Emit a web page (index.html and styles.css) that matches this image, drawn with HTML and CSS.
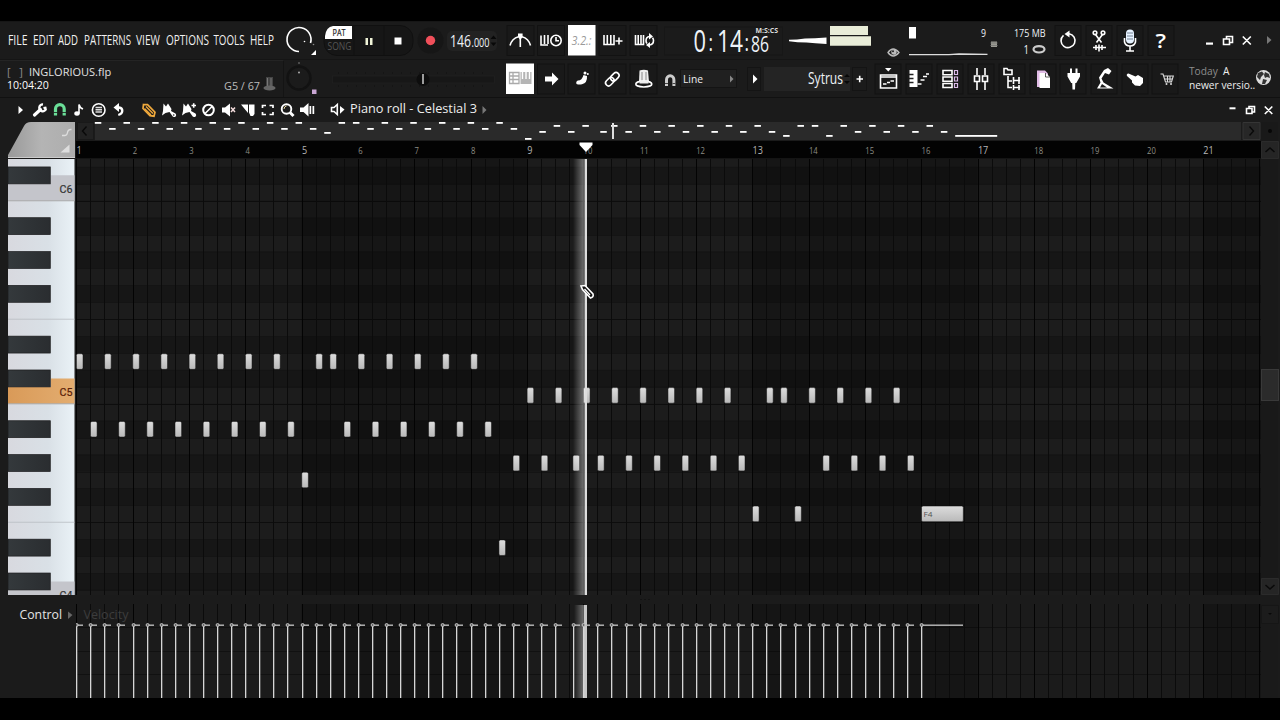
FILE: index.html
```html
<!DOCTYPE html>
<html lang="en">
<head>
<meta charset="utf-8">
<title>Piano roll - Celestial 3</title>
<link rel="stylesheet" href="styles.css">
</head>
<body>
<main class="app">
  <header class="toolbar">
    <div class="row row-main">
      <svg class="g" width="284" height="38" viewBox="0 22 284 38">
        <g class="menu">
          <text x="8" y="45" textLength="19.500">FILE</text><text x="33" y="45" textLength="21">EDIT</text>
          <text x="58" y="45" textLength="20">ADD</text><text x="84" y="45" textLength="47">PATTERNS</text>
          <text x="136" y="45" textLength="24">VIEW</text><text x="166" y="45" textLength="43">OPTIONS</text>
          <text x="213.500" y="45" textLength="31">TOOLS</text><text x="250" y="45" textLength="24">HELP</text>
        </g>
      </svg>
      <svg class="g" width="36" height="38" viewBox="284 22 36 38">
        <path class="s" d="M310.500 43A12 12 0 1 0 299 51.500" stroke-width="1.700"/>
        <circle class="f" cx="304.500" cy="41.500" r=".8"/><circle cx="313.500" cy="44.500" r=".8" fill="#888"/>
        <path class="f" d="M316 50v5h-5z"/>
      </svg>
      <svg class="g" width="126" height="38" viewBox="320 22 126 38">
        <rect x="324" y="25.500" width="89" height="30" rx="13" fill="#161616" stroke="#101010"/>
        <path d="M333 26h19v13H325v-3q1-9 8-10z" fill="#fff"/>
        <path d="M354 26v29M384 26v29" stroke="#111"/>
        <text x="332.500" y="36.300" textLength="13" font-size="8.500" fill="#222" stroke="#222" stroke-width=".2">PAT</text>
        <text x="327.500" y="50" textLength="24" font-size="10" fill="#555">SONG</text>
        <path d="M365.500 38h2.500v7h-2.500zM370 38h2.500v7H370z" fill="#f0f4d8"/>
        <path class="f" d="M394.500 37.500h7v7h-7z"/>
        <circle cx="430.500" cy="40.500" r="13" fill="#161616"/><circle cx="430.500" cy="40.500" r="4.700" fill="#f04f5a"/>
      </svg>
      <svg class="g" width="59" height="38" viewBox="446 22 59 38">
        <rect x="447" y="31" width="50" height="20" rx="5" fill="#222"/>
        <text class="lcd" x="450" y="46.500" textLength="21" font-size="16.500">146</text>
        <text class="lcd" x="471.500" y="46.500" textLength="18" font-size="12.500">.000</text>
        <path d="M490.500 39l3-3.500 3 3.500zM490.500 42.500l3 3.500 3-3.500z" fill="#080808"/>
      </svg>
      <svg class="g" width="154" height="38" viewBox="505 22 154 38">
        <g class="box"><rect x="507" y="25.500" width="27" height="30"/><rect x="537.500" y="25.500" width="27" height="30"/><rect x="599" y="25.500" width="27" height="30"/><rect x="630" y="25.500" width="27" height="30"/></g>
        <path class="s" d="M510 45.500q2-7 8.500-8.700M530.500 45.500q-2-7-8.500-8.700M520.300 36v11"/><path d="M518 33.500h4.600v3.500l-2.300 3-2.300-3z" fill="#fff"/>
        <path class="s" d="M541 35.500v9.500h7M544.500 35v9M548 35v9" stroke-width="1.800"/><circle class="s" cx="556" cy="40.500" r="5.200" fill="#1b1b1b"/><path class="s" d="M556 37v3.800h3" stroke-width="1.300"/>
        <rect x="568" y="25" width="27.500" height="30.500" fill="#fff"/>
        <text x="571.500" y="45" textLength="20" font-size="12.500" font-style="italic" fill="#9a9a9a">3.2.:</text>
        <path class="s" d="M604 35v9.500h10V35M607.300 35v9M610.800 35v9M615.500 41h7M619 37.500v7" stroke-width="1.900"/>
        <path class="s" d="M635.500 35v9.500h8V35M638.200 35v9M641 35v9" stroke-width="1.500"/><path class="s" d="M649.500 36.500q-3.500.5-3.500 4.300 0 1.500 1 2.700M649.500 45q4-.5 4-4.500 0-1.500-1-2.700" stroke-width="1.900"/><path class="f" d="M649 33l4 3.500-4 3zM650 42v6l-4-3z"/>
      </svg>
      <svg class="g" width="127" height="38" viewBox="659 22 127 38">
        <rect x="664.500" y="27" width="118" height="28" fill="none" stroke="#171717"/>
        <text class="lcd" x="693.500" y="51.700" textLength="12.500" font-size="31">0</text><text class="lcd" x="708.500" y="51" textLength="4.500" font-size="24">:</text>
        <text class="lcd" x="717" y="51.700" textLength="26" font-size="31">14</text><text class="lcd" x="744.500" y="51" textLength="4.500" font-size="23">:</text>
        <text class="lcd" x="751" y="51.700" textLength="18" font-size="21.500">86</text>
        <text x="755.500" y="32.500" textLength="22.500" font-size="6.500" font-weight="700" fill="#ddd">M:S:CS</text>
      </svg>
      <svg class="g" width="94" height="38" viewBox="786 22 94 38">
        <path class="f" d="M789 39.800l8-.4 8-.8 10-.4 11.500-.7v6.500l-11-.8-9-.8-9-.2-8.500-.9z"/>
        <path d="M830 26h38v9h-38zM830 36.200h41v9.500h-41z" fill="#e9edd8"/>
      </svg>
      <svg class="g" width="173" height="38" viewBox="880 22 173 38">
        <path d="M888 52.500q5-7 11 0q-6 7-11 0z" fill="none" stroke="#bbb" stroke-width="1.300"/><circle cx="894" cy="52" r="2.700" fill="#bbb"/><circle cx="893" cy="51.200" r="1" fill="#222"/>
        <path class="f" d="M909 27h7v11.500h-7z"/><path d="M909 54.700h40l10-.7 28.500.3" stroke="#ddd" stroke-width="1.300" fill="none"/>
        <text class="sm" x="981" y="37.300" textLength="5" font-size="11.500">9</text>
        <rect x="991" y="41.500" width="6" height="5.500" fill="#9a9a92"/><path d="M990 43h8M990 45.500h8" stroke="#666" stroke-width=".6"/>
        <text class="sm" x="1014" y="37.300" textLength="31.500" font-size="11.500">175 MB</text>
        <text class="sm" x="1023.500" y="53.500" textLength="5.500" font-size="12">1</text>
        <ellipse cx="1039" cy="49.300" rx="5.500" ry="3.200" fill="none" stroke="#ccc" stroke-width="2.200"/>
      </svg>
      <svg class="g" width="124" height="38" viewBox="1053 22 124 38">
        <g class="box"><rect x="1055" y="25.500" width="26" height="30"/><rect x="1086" y="25.500" width="26" height="30"/><rect x="1117" y="25.500" width="26" height="30"/><rect x="1148" y="25.500" width="26" height="30"/></g>
        <path class="s" d="M1063.500 35.300a7 7 0 1 0 5.500-1.600" stroke-width="2.100"/><path class="f" d="M1069.500 30.500v7l-5-3.500z"/>
        <path class="s" d="M1095.500 34.500l6 8M1102.500 34.500l-6 8M1093 47.500h13M1096 45v5M1099 44.500v7M1102 45v5" stroke-width="1.500"/><circle cx="1095" cy="32.800" r="1.800" class="s" stroke-width="1.200"/><circle cx="1103" cy="32.800" r="1.800" class="s" stroke-width="1.200"/>
        <rect x="1126" y="29.500" width="8" height="14" rx="4" fill="#e6f2ff"/><path d="M1127 33h6M1127 36h6M1127 39h6" stroke="#567" stroke-width=".8"/><path class="s" d="M1124.500 38v4q1 4 5.500 4t5.500-4v-4M1130 46v5M1126 51h8" stroke-width="1.500"/>
        <text x="1155.500" y="47.500" font-size="20" font-weight="600" fill="#fff" textLength="10.500">?</text>
      </svg>
      <svg class="g" width="103" height="38" viewBox="1177 22 103 38">
        <path class="f" d="M1206 42.500h7v2.200h-7z"/>
        <path class="s" d="M1226.500 39v-2.500h6v6h-3M1223.500 39h6v5.500h-6zM1242.800 36.500l8 8M1250.800 36.500l-8 8"/>
        <path d="M1267 36l4.500 4-4.500 4z" fill="#777"/>
      </svg>
    </div>
    <div class="row row-sub">
      <div class="hint">
        <div class="hint-file"><span class="dim">[ &nbsp; ]</span><span>INGLORIOUS.flp</span></div>
        <div class="hint-info"><span class="clock">10:04:20</span><span class="key">G5 / 67</span>
          <svg width="14" height="16" viewBox="262 76 14 16"><path d="M266 77h7v10h-7z" fill="#444"/><path d="M267.500 78v9M271 78v9" stroke="#777" stroke-width="1"/><ellipse cx="269.500" cy="88" rx="6" ry="2.500" fill="#666"/></svg>
        </div>
      </div>
      <svg class="g" width="221" height="38" viewBox="284 60 221 38">
        <circle cx="299" cy="78" r="11.500" fill="none" stroke="#121212" stroke-width="2.500"/><circle cx="299" cy="72.500" r=".9" fill="#bbb"/><circle cx="299" cy="63" r=".8" fill="#888"/>
        <rect x="312" y="89.500" width="4.500" height="4.500" fill="#c9a6d4"/>
        <rect x="332.500" y="76" width="162" height="7" fill="#171717" stroke="#222" stroke-width=".7"/>
        <path d="M338 73h150M338 86h150" stroke="#151515" stroke-width="2" stroke-dasharray="1 8"/>
        <circle cx="423" cy="79.500" r="6.500" fill="#0d0d0d"/><path d="M423 74v10" stroke="#ccc" stroke-width="1.500"/>
      </svg>
      <svg class="g" width="154" height="38" viewBox="505 60 154 38">
        <g class="box"><rect x="537.500" y="64" width="27" height="30"/><rect x="568" y="64" width="27" height="30"/><rect x="599" y="64" width="27" height="30"/><rect x="630" y="64" width="27" height="30"/></g>
        <rect x="506" y="63.500" width="28" height="30.500" fill="#fff"/>
        <path d="M509.500 72.500h9.500v11h-9.500zM510 76h9M510 79.500h9M513 73v10" fill="none" stroke="#aaa" stroke-width="1.300"/><path d="M520.500 72h11v12h-11z" fill="#b5b5b5"/><path d="M522.500 72v7M526 72v7M529.500 72v7" stroke="#fff" stroke-width="1.400"/>
        <path class="f" d="M545 76.500h7V72.500l6.500 6.500-6.500 6.500v-4h-7z"/>
        <path d="M576.500 84q-1-2.500 1.500-3.500 4 0 5.500-5.500l3.500 1q.500 7-5 8.300-3 .7-5.500-.3z" fill="#fff"/><circle cx="585" cy="73" r="1.500" fill="#fff"/><circle cx="587.800" cy="74" r="1" fill="#fff"/>
        <g class="s" transform="rotate(-45 612.500 79)"><rect x="604" y="76" width="9.500" height="6" rx="3"/><rect x="611" y="76" width="9.500" height="6" rx="3"/></g>
        <path d="M639.500 70.500q4.500-1.500 8.500 0l1 11.500h-10z" fill="#eee"/><path d="M642 72v10M646 72v10" stroke="#888"/><ellipse class="s" cx="643.800" cy="84" rx="8" ry="3" stroke-width="2"/><path d="M639.500 80.500h9v3h-9z" fill="#eee"/>
      </svg>
      <svg class="g" width="86" height="38" viewBox="659 60 86 38">
        <path d="M666.500 86v-6a3.700 4.300 0 0 1 7.400 0v6" fill="none" stroke="#ccc" stroke-width="3"/><path d="M665 83.500h3M672.500 83.500h3" stroke="#444"/>
        <rect x="680.500" y="69.500" width="56" height="18" fill="#202020" stroke="#141414"/>
        <text class="w" x="683" y="82.500" textLength="20" font-size="11.500">Line</text>
        <path d="M730 75.500l3.500 3.500-3.500 3.500z" fill="#888"/>
      </svg>
      <svg class="g" width="128" height="38" viewBox="745 60 128 38">
        <rect x="747.500" y="67.500" width="13" height="23" fill="#1b1b1b" stroke="#141414"/><path class="f" d="M753 74.500l4.500 4.500-4.500 4.500z"/>
        <rect x="764" y="67" width="86" height="24" fill="#242424"/>
        <text class="lcd" x="808" y="84" textLength="35" font-size="16">Sytrus</text>
        <path d="M844 77l3-3 3 3zM844 81l3 3 3-3z" fill="#080808"/>
        <rect x="852.500" y="67.500" width="14" height="23" fill="#1b1b1b" stroke="#141414"/><path class="s" d="M856.500 79h6.500M859.700 75.800v6.500"/>
      </svg>
      <svg class="g" width="308" height="38" viewBox="873 60 308 38">
        <g class="box"><rect x="875" y="64" width="26" height="30"/><rect x="906" y="64" width="26" height="30"/><rect x="937" y="64" width="26" height="30"/><rect x="968" y="64" width="26" height="30"/><rect x="999" y="64" width="26" height="30"/><rect x="1030" y="64" width="26" height="30"/><rect x="1060" y="64" width="26" height="30"/><rect x="1091" y="64" width="26" height="30"/><rect x="1122" y="64" width="26" height="30"/><rect x="1152" y="64" width="26" height="30"/></g>
        <path class="f" d="M885 68h6.500l-3.200 3.500z"/><path class="s" d="M880.500 75h16v13h-16zM881 77h15" stroke-width="1.600"/><path class="s" d="M883 84h3.500M887 82.500h3M890.500 81h3.500" stroke-width="1.800"/>
        <path d="M909.500 70h8v17h-8z" fill="#fff"/><path d="M909 74.500h4.500M909 78.500h4.500M909 82.500h4.500" stroke="#222" stroke-width="1.400"/><path class="s" d="M917.500 84h4M920.500 80h4M923 76.500h4M926 74h3" stroke-width="2.800"/>
        <path class="s" d="M943 70.500h9v4.300h-9zM943 77h9v4.300h-9zM943 83.500h9v4h-9z" stroke-width="1.500"/><path d="M954.500 70.500h3v4h-3zM954.500 77h3v4h-3zM954.500 83.500h3v4h-3z" fill="none" stroke="#dbb9e8" stroke-width="1.200"/>
        <path class="s" d="M977 68v7M977 82v8M985 68v7M985 82v8M974.500 76h5v5.500h-5zM982.500 76h5v5.500h-5z" stroke-width="1.500"/>
        <path class="s" d="M1004 68.500h3l1 1.500h4v4.500h-8zM1008 76v11.500h4M1008 81h4M1013.500 77v7M1013.500 85v5M1019 77v7M1019 85v5M1013 80.500h7M1013 87.500h7" stroke-width="1.300"/>
        <path d="M1037 70.500h8l3 3V87h-11z" fill="#e1bce6"/><path class="f" d="M1039.500 73h6l4.500 4v11h-10.500z"/><path d="M1045.500 73v4h4.500" stroke="#333" stroke-width=".8" fill="none"/>
        <path class="f" d="M1067.500 73h2.500v-4.500h2V73h3.500v-4.500h2V73h2.500v3.500l-3.700 6.500h-1l-.3 6.500h-2.500l-.3-6.500h-1l-3.700-6.500z"/>
        <path class="f" d="M1104 70l4-2 3.500 3-2.500 3.500-4-1.500-3.500 5.500 2 4 10 6h-16.500l3.500-6-1.500-5z"/><path d="M1102 84l5 3.500h-7z" fill="#1b1b1b"/>
        <path class="f" d="M1128.500 73.500l7 3 2.500-1.500 5 3v5l-3 3-5-.5-3-3v-2l-5-4.500q-1-2 1.500-2.500z"/>
        <path d="M1160.500 74h2.500l2.500 8h6l1.800-6h-9.300M1165 79h7M1167.500 76v6M1170 76v6" fill="none" stroke="#ddd" stroke-width="1.100"/><circle cx="1166.500" cy="84" r="1" fill="#ddd"/><circle cx="1171" cy="84" r="1" fill="#ddd"/>
      </svg>
      <div class="news"><p><span class="dim">Today</span> &nbsp;A<br>newer versio..</p>
        <svg width="17" height="17" viewBox="0 0 17 17"><circle cx="8.500" cy="8.500" r="7.500" fill="#ddd"/><path d="M3 4l4-1.500L9 5 6 8 5 11 2 8zM10 3l4 2 1 4-3-1-2 1-1-3zM8 10l4 1-2 4H7z" fill="#333"/></svg>
      </div>
    </div>
  </header>

  <div class="titlebar">
    <svg class="g" width="346" height="24" viewBox="0 98 346 24">
      <path class="f" d="M18.500 106l4.500 4-4.500 4z"/>
      <path d="M34.500 115l6-5.500" stroke="#fff" stroke-width="3.200" stroke-linecap="round"/><path d="M46 108.500a3.400 3.400 0 1 1-3-4M46.500 107.500l-3 .7" fill="none" stroke="#fff" stroke-width="2.300"/>
      <path d="M55.500 115.500v-6.500a4.300 4.300 0 0 1 8.700 0v6.500" fill="none" stroke="#6bdf98" stroke-width="3.200"/><path d="M53.500 112.500h4M62 112.500h4" stroke="#1b1b1b" stroke-width=".8"/>
      <ellipse class="f" cx="77" cy="113.500" rx="2.700" ry="2.200"/><path class="s" d="M79 113.500v-9q.5 3 4 4.500"/>
      <circle class="s" cx="98.700" cy="110" r="6.300"/><path d="M95.500 107.500h6.500M95.500 109.800h6.500M95.500 112h6.500" stroke="#ddd" stroke-width="1.500"/>
      <path d="M117 107.500h2q3.500.5 3.300 3.500t-4 4" fill="none" stroke="#fff" stroke-width="2.300"/><path class="f" d="M119 103v9l-5.500-4.500z"/>
      <path d="M143.500 104.500l4 .2 7.500 7.500-1 4-4-.5-7-7.200z" fill="none" stroke="#f0a93c" stroke-width="1.700"/><path d="M146 106.500l7 7M144.500 108.500l6.500 6.500" stroke="#f0a93c" stroke-width="1.300"/>
      <path class="f" d="M163.500 103.500l2.500 3 2-3 3.500 5.500-.5 2 4.500 2.500q1.500 2-.5 3.500-2 .5-3-1.500l-2.500-3.500-4 1-3.500 2.500 1-4.500z"/><circle cx="173.700" cy="115" r=".8" fill="#222"/>
      <path class="f" d="M183.500 103.500l2.500 3 2-3 3.500 5.500-.5 2 4.500 2.500q1.500 2-.5 3.500-2 .5-3-1.500l-2.500-3.500-4 1-3.500 2.500 1-4.500z"/><path class="s" d="M191.500 105.500h4.500M193.700 103.300v4.500" stroke-width="1.300"/>
      <circle cx="208.500" cy="110" r="5.300" fill="none" stroke="#fff" stroke-width="2"/><path class="s" d="M204.800 113.700l7.500-7.500" stroke-width="2"/>
      <path class="f" d="M222 107.500h3l5-4v13l-5-4h-3z"/><path d="M231 107.500l4 4.500M235 107.500l-4 4.500" stroke="#f3dcdc" stroke-width="1.500"/>
      <path class="f" d="M241 104.500h7v8.500zM249 104.500h5.500v9.500l-1.500 2h-2.500l-1.500-3.500z"/>
      <path d="M262.500 108v-2.500h3.500M269.500 105.500h3.500v2.500M273 112v2.500h-3.500M266 114.500h-3.500v-2.500" fill="none" stroke="#fff" stroke-width="1.700"/>
      <circle cx="286.500" cy="109" r="4.800" fill="none" stroke="#fff" stroke-width="1.900"/><path d="M290 112.500l3.500 3.500" stroke="#fff" stroke-width="3"/><path d="M284 109q0-2.500 2.500-3" stroke="#e8d9a0" fill="none"/>
      <path class="f" d="M300 107.500h3.500l5-4.500v13.500l-5-4.500H300zM309.500 106h1.700v8h-1.700zM312.500 106h1.700v8h-1.700z"/>
      <path class="s" d="M331.500 107.500h2.500l3.300-3v10l-3.300-3h-2.500z" stroke-width="1.400"/><path class="f" d="M340 106l4.500 3.500-4.500 4.200z"/>
    </svg>
    <svg class="g" width="150" height="24" viewBox="346 98 150 24"><text class="w" x="350" y="113.400" textLength="127" font-size="12.500">Piano roll - Celestial 3</text><path d="M482.500 106l4 4-4 4z" fill="#777"/></svg>
    <svg class="g push" width="60" height="24" viewBox="1220 98 60 24"><path class="f" d="M1229.500 107.300h6v2h-6z"/><path class="s" d="M1249 108.500V106.500h5.500v5.500H1252M1246.500 108.500h5.500v5h-5.500zM1264.800 106.500l7.500 7.500M1272.300 106.500l-7.500 7.500" stroke-width="1.400"/></svg>
  </div>

  <section class="editor">
    <div class="piano">
      <svg width="68" height="37" viewBox="8 122 68 37"><defs><linearGradient id="cap" x2="1"><stop stop-color="#999"/><stop offset=".5" stop-color="#b4b4b4"/><stop offset="1" stop-color="#adadad"/></linearGradient></defs><path d="M8 158v-3l16-29q2-4 7-4h44v36z" fill="url(#cap)"/><path d="M8 157.500h67" stroke="#ccc"/><path d="M62 135.500h3q2 0 2.500-3t3-3h1" fill="none" stroke="#ddd" stroke-width="1.300"/><path d="M60.500 152.500h9v-8z" fill="#ddd"/></svg>
      <svg id="keys" width="68" height="436" viewBox="8 159 68 436"></svg>
    </div>
    <div class="roll">
      <svg id="overview" width="1185" height="19" viewBox="76 122 1185 19"></svg>
      <svg id="ruler" width="1185" height="18" viewBox="76 141 1185 18"></svg>
      <svg id="grid" width="1185" height="436" viewBox="76 159 1185 436"></svg>
    </div>
    <svg class="vscroll" width="19" height="473" viewBox="1261 122 19 473">
      <path d="M1261 122h17v473h-17z" fill="#191919"/><circle cx="1270" cy="131" r="2" fill="#060606"/>
      <path d="M1261.500 141.500h17v17h-17zM1261.500 578.500h17v16h-17z" fill="#252525" stroke="#303030" stroke-width=".7"/>
      <path d="M1265.500 152l4.500-4 4.500 4M1265.500 585l4.500 4 4.500-4" fill="none" stroke="#090909" stroke-width="1.500"/>
      <rect x="1261.500" y="369.500" width="17" height="31" fill="#2b2b2b" stroke="#393939"/>
    </svg>
  </section>
  <div class="splitter"><i></i><i></i><i></i></div>
  <section class="control">
    <div class="control-name"><svg width="76" height="24" viewBox="0 604 76 24"><text x="19.500" y="619.300" textLength="42.500" font-size="12.500" fill="#e4e4e4">Control</text><path d="M68 611.500l4.500 3.500-4.500 4z" fill="#666"/></svg></div>
    <svg id="velocity" width="1185" height="94" viewBox="76 604 1185 94"></svg>
    <svg width="19" height="94" viewBox="1261 604 19 94"><path d="M1261 604h17v94h-17z" fill="#1a1a1a"/><path d="M1261.500 605.500h17v18h-17z" fill="#1c1c1c" stroke="#161616"/><path d="M1268 613h4l-2 2z" fill="#080808"/></svg>
  </section>
</main>
<script src="script.js"></script>
</body>
</html>
```
FILE: styles.css
```css
* { box-sizing: border-box; }
body {
  margin: 0;
  height: 720px;
  padding: 21px 0 22px;
  background: #000;
  overflow: hidden;
  font-family: "Open Sans", "Noto Sans", sans-serif;
}
svg { display: block; flex: none; }
svg text { font-family: "Open Sans", "Noto Sans", sans-serif; }
.app {
  height: 677px;
  display: flex;
  flex-direction: column;
  border-top: 1px solid #161616;
  background: #1b1b1b;
}
.row { display: flex; height: 38px; }
.row .g { overflow: visible; }
.row-main { border-bottom: 1px solid #151515; }
.row-sub { border-bottom: 1px solid #111; }
.f { fill: #fff; }
.s { fill: none; stroke: #fff; stroke-width: 1.6; }
.box rect { fill: #191919; stroke: #121212; stroke-width: 1; }
.menu text { fill: #f1f1f1; font-size: 14px; font-weight: 500; }
.lcd, .sm { fill: #eef3f8; }
.w { fill: #eee; font-weight: 500; }

.hint {
  width: 284px;
  padding: 3px 10px 0 7px;
  color: #e2e2e2;
  font-size: 11px;
  line-height: 15px;
  border-top: 1px solid #242424;
  border-right: 1px solid #141414;
}
.hint-file { display: flex; gap: 4px; height: 14px; }
.hint-info { display: flex; align-items: center; height: 15px; }
.hint-info svg { margin: -4px 0 0 2px; }
.hint-info svg { margin-right: -3px; }
.clock { font-size: 10.6px; font-weight: 500; color: #fff; }
.key { margin-left: auto; color: #bbb; font-size: 10.8px; }
.dim { color: #8d8d8d; }
.hint-file .dim { width: 18px; white-space: nowrap; }
.news {
  width: 99px;
  display: flex;
  align-items: center;
  justify-content: space-between;
  padding: 0 8px 2px 8px;
  color: #eee;
  font-size: 10.2px;
  line-height: 14px;
}
.news p { margin: 0; white-space: nowrap; }

.titlebar { display: flex; height: 24px; }
.push { margin-left: auto; }
.editor { display: flex; height: 473px; }
.piano { width: 76px; padding-left: 8px; }
.roll { width: 1185px; background: #151515; }
.splitter {
  height: 9px;
  display: flex;
  justify-content: center;
  align-items: center;
  gap: 2px;
  padding-left: 10px;
  background: #1b1b1b;
}
.splitter i { width: 2px; height: 1px; background: #131313; }
.control { display: flex; height: 94px; }
.control-name { width: 76px; }
```
FILE: script.js
```javascript
const X0 = 76.2, STEP = 14.085, ROW = 16.92, C5_TOP = 386.9;
const rowY = semi => C5_TOP - semi * ROW;
const isBlack = semi => [1, 3, 6, 8, 10].includes(((semi % 12) + 12) % 12);
const rect = (x, y, w, h, fill, extra = '') =>
  `<rect x="${x.toFixed(2)}" y="${y.toFixed(2)}" width="${w.toFixed(2)}" height="${h.toFixed(2)}" fill="${fill}" ${extra}/>`;
const range = (a, b, s) => { const r = []; for (let i = a; i <= b; i += s) r.push(i); return r; };
const put = (id, html) => { document.getElementById(id).innerHTML = html; };

const notes = [];
const add = (semi, steps) => steps.forEach(k => notes.push({ semi, k, len: 0.5 }));
add(2, [...range(0, 14, 2), 17, ...range(18, 28, 2)]);
add(-2, [...range(1, 15, 2), ...range(19, 29, 2)]);
add(-5, [16]);
add(-9, [30]);
add(-4, [31, 33, 35.25, ...range(37, 47, 2), ...range(53, 59, 2)]);
add(0, [...range(32, 46, 2), 49, ...range(50, 58, 2)]);
add(-7, [48, 51]);
notes.push({ semi: -7, k: 60, len: 3 });

/* Vertical beat and bar lines, plus the alternating four-bar shading. */
function columns(top, height) {
  let out = '';
  for (const bar of [4, 12, 20]) {
    const x = X0 + bar * 4 * STEP;
    out += rect(x, top, Math.min(16 * STEP, 1261 - x), height, '#000', 'opacity=".2"');
  }
  for (let k = 0; k <= 84; k++) {
    const x = Math.round(X0 + k * STEP);
    out += rect(x, top, 1, height, k % 4 ? '#0b0b0b' : '#030303');
  }
  return out;
}

/* Piano keys */
let keys = `<defs>
<linearGradient id="white" x2="1"><stop stop-color="#d8d9df"/><stop offset=".6" stop-color="#d9e0e6"/><stop offset="1" stop-color="#eaf2f7"/></linearGradient>
<linearGradient id="black" x2="1"><stop stop-color="#34393c"/><stop offset="1" stop-color="#2a2d30"/></linearGradient>
<linearGradient id="orange" x2="1"><stop stop-color="#d99a58"/><stop offset="1" stop-color="#e3ad70"/></linearGradient></defs>`;
keys += rect(8, 159, 66.5, 436, 'url(#white)');
[[12, '#c4c5cb', 'C6', '#333'], [0, 'url(#orange)', 'C5', '#5a2008'], [-12, '#c4c5cb', 'C4', '#333']].forEach(([s, fill, label, color]) => {
  const y = rowY(s);
  keys += `<path d="M8 ${y}H51V${y - 8.5}H74.500V${y + ROW}H8z" fill="${fill}"/><path d="M8 ${y + ROW}H74.500" stroke="#aaa"/>`;
  keys += `<text x="59.500" y="${y + 8.7}" font-size="11.500" fill="${color}" stroke="${color}" stroke-width=".2" textLength="13" style="font-family:Roboto,sans-serif">${label}</text>`;
});
[4, -8].forEach(s => { keys += `<path d="M8 ${rowY(s)}H74.500" stroke="#b9bdc1" stroke-width=".8"/>`; });
for (let s = 13; s >= -11; s--) if (isBlack(s)) keys += rect(8, rowY(s), 42.3, ROW, 'url(#black)', 'stroke="#1c1c1e" stroke-width=".7"');
put('keys', keys);

/* Overview strip */
let ov = rect(76, 122, 1185, 19, '#1b1b1b') + rect(95, 122, 1146, 18, '#2a2a2a');
ov += '<path d="M77.500 122.500h16v17h-16z" fill="#222" stroke="#191919"/><path d="M86.500 126.500l-4 4.500 4 4.500" fill="none" stroke="#090909" stroke-width="1.400"/>';
ov += '<path d="M1243 122.500h17v17h-17z" fill="#272727" stroke="#353535"/><path d="M1249.500 126.500l4 4.500-4 4.500" fill="none" stroke="#090909" stroke-width="1.400"/>';
notes.forEach(n => { ov += rect(94.8 + n.k * 14.34, Math.round(125.2 - n.semi * 1.4), n.len === 3 ? 42 : 6.5, 1.8, '#fff'); });
ov += rect(612, 123, 2, 16, '#ddd');
put('overview', ov);

/* Bar numbers */
let ruler = rect(76, 141, 1185, 18, '#030303') + rect(76, 158, 1185, 1, '#141414');
for (let b = 0; b <= 20; b++) {
  const main = b % 4 === 0;
  const width = (b > 8 ? 2 : 1) * (main ? 5.2 : 4.4);
  ruler += `<text x="${(X0 + b * 4 * STEP + .3).toFixed(1)}" y="${main ? 154 : 153.8}" font-size="${main ? 10.5 : 9}" fill="${main ? '#b5b5b5' : '#8d8d84'}" textLength="${width}">${b + 1}</text>`;
}
ruler += '<path d="M579.500 142.500h13v2.500l-6.500 7-6.500-7z" fill="#fff"/>';
put('ruler', ruler);

/* Note grid */
let grid = `<defs><linearGradient id="glow" x2="1"><stop stop-color="#fff" stop-opacity="0"/><stop offset="1" stop-color="#fff" stop-opacity=".42"/></linearGradient>
<linearGradient id="note" x2="0" y2="1"><stop stop-color="#ddd"/><stop offset="1" stop-color="#b9b9b9"/></linearGradient></defs>`;
for (let s = 14; s >= -13; s--) {
  grid += rect(76, rowY(s), 1185, ROW, isBlack(s) ? '#161616' : '#1c1c1c');
  grid += rect(76, Math.round(rowY(s)), 1185, 1, [4, -8, 11, -1].includes(s) ? '#0d0d0d' : '#141414');
}
grid += columns(159, 436);
notes.forEach(n => {
  const x = X0 + n.k * STEP;
  grid += rect(x + .2, rowY(n.semi) + .7, n.len === 3 ? 41.8 : 6.6, 15.6, 'url(#note)', 'rx="1.500" stroke="#111" stroke-width=".5"');
});
grid += '<text x="923.500" y="517" font-size="8" fill="#555" textLength="9">F4</text>';
grid += rect(573, 159, 12, 436, 'url(#glow)') + rect(585, 159, 2, 436, '#ddd');
grid += '<path d="M581 286l4-.5 8 8.500q1 3-2.500 4l-8-8.500z" fill="#111" stroke="#fff" stroke-width="1.600"/><path d="M584.500 289l5.500 6" stroke="#fff" stroke-width="1.300"/>';
put('grid', grid);

/* Velocity lane */
let vel = rect(76, 604, 1185, 94, '#1b1b1b');
[627, 651, 674].forEach(y => { vel += rect(76, y, 1185, 1, '#111'); });
vel += columns(604, 94);
vel += '<text x="83.500" y="619.300" font-size="12.500" fill="#3d3d3d" textLength="45">Velocity</text>';
vel += rect(574, 605, 11, 93, 'url(#glow)') + rect(584, 605, 3, 93, '#c8c8c8');
notes.forEach(n => {
  const px = Math.round(X0 + n.k * STEP);
  vel += rect(px, 626, 1.3, 72, '#d6d6d6') + rect(px, 624.5, n.len === 3 ? 42 : 7, 1.4, '#bbb');
  vel += `<circle cx="${px + .6}" cy="625" r="1.500" fill="#666" stroke="#ccc" stroke-width=".9"/>`;
});
put('velocity', vel);

/* Condensed labels squeeze their glyphs instead of their letter spacing. */
document.querySelectorAll('text[textLength]').forEach(t => t.setAttribute('lengthAdjust', 'spacingAndGlyphs'));
```
